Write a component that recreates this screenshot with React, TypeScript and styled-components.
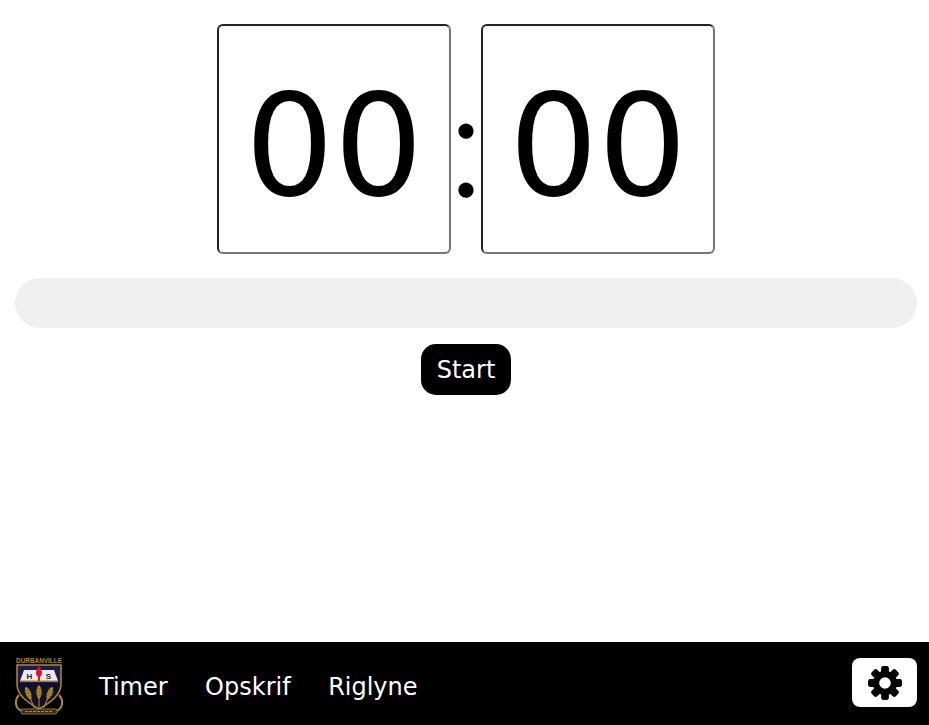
import React from "react";
import styled, { createGlobalStyle } from "styled-components";

const Global = createGlobalStyle`
  html, body { margin: 0; padding: 0; height: 100%; background: #fff; }
  #root { height: 100%; }
`;
const Page = styled.div`
  height: 725px; display: flex; flex-direction: column;
  font-family: "DejaVu Sans", Verdana, sans-serif; overflow: hidden;
`;
const Main = styled.main`
  flex: 1; display: flex; flex-direction: column; align-items: center;
  padding: 24px 12px 0 15px;
`;
const Clock = styled.div`display: flex; align-items: stretch;`;
const Digits = styled.div`
  box-sizing: border-box; width: 234px; height: 230px; padding-top: 16px;
  display: flex; align-items: center; justify-content: center;
  border: 2px solid; border-color: #222 #767676 #767676 #222; border-radius: 6px;
  font: 400 140px/1 "DejaVu Sans", Verdana, sans-serif; color: #000;
`;
const Colon = styled.div`
  width: 30px; display: flex; align-items: center; justify-content: center;
  font: 300 148px/1 Lato, sans-serif; color: #000; -webkit-text-stroke: 1.5px #000;
`;
const Track = styled.div`
  width: 100%; height: 50px; margin-top: 24px; border-radius: 25px; background: #f0f0f0;
`;
const StartButton = styled.button`
  margin-top: 16px; width: 90px; height: 51px; padding: 0; border: 0; border-radius: 15px;
  background: #000; color: #fff; font: 400 24px "DejaVu Sans", Verdana, sans-serif;
`;
const Footer = styled.footer`
  height: 83px; box-sizing: border-box; flex: none; background: #000; display: flex; align-items: flex-start;
  padding: 15px 12px 0 15px;
`;
const Nav = styled.nav`
  display: flex; align-items: center; height: 58px; padding-top: 2px; box-sizing: border-box;
  gap: 37.5px; margin-left: 36px; flex: 1;
`;
const NavLink = styled.a`color: #fff; font-size: 24px; text-decoration: none;`;
const Settings = styled.button`
  width: 65px; height: 49px; margin-top: 1px; padding: 0; border: 0; border-radius: 8px; background: #fff; color: #000;
  display: flex; align-items: center; justify-content: center;
`;
const gold = "#b08a2c";
const Gear = () => (
  <svg width="34" height="34" viewBox="-17.5 -17.5 35 35" fill="currentColor" aria-hidden="true">
    {[0, 45, 90, 135, 180, 225, 270, 315].map((a) => (
      <rect key={a} x="-4" y="-17.5" width="8" height="10" rx="2.2" transform={`rotate(${a})`} />
    ))}
    <path fillRule="evenodd" d="M0-12.5A12.5 12.5 0 1 1 0 12.5A12.5 12.5 0 1 1 0-12.5ZM0-6A6 6 0 1 0 0 6A6 6 0 1 0 0-6Z" />
  </svg>
);
const Wheat = ({ x, y, r }: { x: number; y: number; r: number }) => (
  <g transform={`translate(${x} ${y}) rotate(${r})`}>
    <path d="M0 0V14" stroke={gold} strokeWidth="1" />
    <path d="M0-9C-3.5-6-3.5 2 0 5C3.5 2 3.5-6 0-9Z" fill={gold} />
    <path d="M-3-5H3M-3.4-2H3.4M-3 1H3" stroke="#5f4a18" strokeWidth=".6" />
  </g>
);
const Logo = () => (
  <svg width="48" height="58" viewBox="0 0 48 58" aria-label="Durbanville crest" style={{ flex: "none" }}>
    <text x="24" y="6" textAnchor="middle" fontSize="6.6" fontWeight="700" fontFamily="Liberation Sans" fill={gold} textLength="46" lengthAdjust="spacingAndGlyphs">DURBANVILLE</text>
    <path d="M4 38C-1 43 0 52 7 54M44 38C49 43 48 52 41 54" stroke={gold} strokeWidth="2" fill="none" />
    <path d="M2 8H46V27C46 38 36 45 24 52C12 45 2 38 2 27Z" fill="#1c1c4c" stroke={gold} strokeWidth="1.5" />
    <path d="M3 26H45C45 38 35 44 24 51C13 44 3 38 3 26Z" fill="#111128" />
    <path d="M9 13H39L43 24H5Z" fill="#eceaf0" />
    <path d="M5 24H43" stroke="#c9a036" strokeWidth="1.4" />
    <path d="M24 9C26 12 27 14 27 16C27 18 26 19 25 20V24H23V20C22 19 21 18 21 16C21 14 22 12 24 9Z" fill="#e01528" />
    <text x="14.5" y="22" fontSize="8" fontWeight="700" fontFamily="Liberation Sans" fill="#222250" textAnchor="middle">H</text>
    <text x="33.5" y="22" fontSize="8" fontWeight="700" fontFamily="Liberation Sans" fill="#222250" textAnchor="middle">S</text>
    <Wheat x={24} y={37} r={0} />
    <Wheat x={14} y={38} r={-22} />
    <Wheat x={34} y={38} r={22} />
    <rect x="6" y="52" width="36" height="5" rx="2" fill="#3a2e10" stroke={gold} strokeWidth=".8" />
    <path d="M10 54.5H38" stroke={gold} strokeWidth="1.2" strokeDasharray="3 1" />
  </svg>
);
export default function App() {
  return (
    <Page>
      <Global />
      <Main>
        <Clock>
          <Digits>00</Digits>
          <Colon>:</Colon>
          <Digits>00</Digits>
        </Clock>
        <Track />
        <StartButton>Start</StartButton>
      </Main>
      <Footer>
        <Logo />
        <Nav>
          <NavLink>Timer</NavLink>
          <NavLink>Opskrif</NavLink>
          <NavLink>Riglyne</NavLink>
        </Nav>
        <Settings aria-label="Settings"><Gear /></Settings>
      </Footer>
    </Page>
  );
}
